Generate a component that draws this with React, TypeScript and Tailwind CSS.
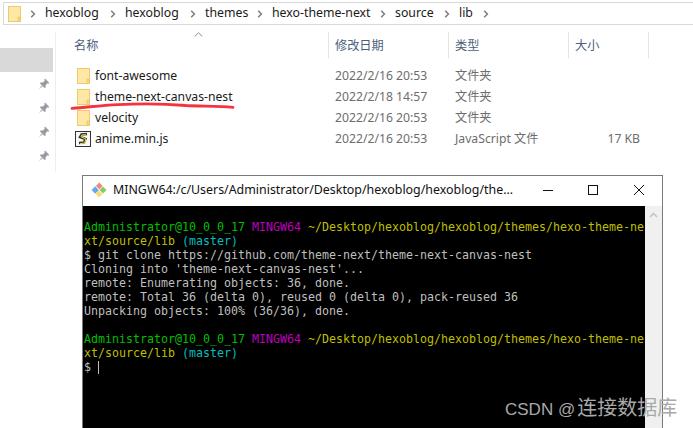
const uiFont = { fontFamily: '"Noto Sans", "Noto Sans CJK SC", sans-serif' };

const rows = [
  { name: "font-awesome", date: "2022/2/16 20:53", type: "文件夹", size: "" },
  { name: "theme-next-canvas-nest", date: "2022/2/18 14:57", type: "文件夹", size: "" },
  { name: "velocity", date: "2022/2/16 20:53", type: "文件夹", size: "" },
  { name: "anime.min.js", date: "2022/2/16 20:53", type: "JavaScript 文件", size: "17 KB" },
];

function Folder({ className }: { className?: string }) {
  return (
    <svg width="13" height="16" viewBox="0 0 13 16" className={className}>
      <rect x="0.5" y="0.5" width="12" height="15" fill="#ffe8a6" stroke="#eccb6e" />
      <rect x="10" y="11" width="2.5" height="4.5" fill="#f7d877" stroke="#e6bf58" strokeWidth="0.6" />
    </svg>
  );
}

function ScriptIcon() {
  return (
    <svg width="16" height="16" viewBox="0 0 16 16" className="-ml-[2px]">
      <rect x="0.5" y="0.5" width="15" height="15" fill="#f8f8f4" stroke="#333" />
      <path d="M12 3 L6.5 3.5 L5 6 L10.5 8 L9 11.5 L4 12" fill="none" stroke="#333" strokeWidth="2.4" />
      <path d="M11 3.6 L6.8 4 L6 5.8 L11 8 L9.6 12 L5 12.6" fill="none" stroke="#e6da3c" strokeWidth="1" />
    </svg>
  );
}

function Pin() {
  return (
    <svg width="12" height="12" viewBox="0 0 12 12">
      <path d="M7 0.5 L11.5 5 L10.5 5.6 L9.6 5.2 L7.6 7.2 L7.6 9.4 L6.8 10.2 L1.8 5.2 L2.6 4.4 L4.8 4.4 L6.8 2.4 L6.4 1.5 Z" fill="#979da3" />
      <path d="M3.8 7.2 L0.8 11.2 L4.8 8.2 Z" fill="#a9aeb3" />
    </svg>
  );
}

function Sep({ className }: { className?: string }) {
  return (
    <svg width="6" height="8" viewBox="0 0 6 8" className={`shrink-0 ${className ?? ""}`}>
      <path d="M1.2 0.8 L4.4 4 L1.2 7.2" fill="none" stroke="#7b7b7b" strokeWidth="1.5" />
    </svg>
  );
}

function GitIcon() {
  return (
    <svg width="16" height="16" viewBox="0 0 16 16">
      <path d="M8 8 L4.2 4.2 L0.6 8 L4.2 11.8 Z" fill="#62a9ef" />
      <path d="M8.2 7.6 L4.9 3.9 L8.2 0.6 L11.6 4.1 Z" fill="#ee8a7c" />
      <path d="M8.4 8 L12 4.5 L15.6 8 L12 11.6 Z" fill="#8bc96b" />
      <path d="M8 8.4 L11.5 12 L8 15.6 L4.6 12.1 Z" fill="#f7dc75" />
      <path d="M5.5 5 L8 8 L11 11" fill="none" stroke="#ffffff" strokeWidth="0.8" />
    </svg>
  );
}

function Prompt() {
  return (
    <>
      <div>
        <span className="text-[#00bf00]">Administrator@10_0_0_17</span>{" "}
        <span className="text-[#bf00bf]">MINGW64</span>{" "}
        <span className="text-[#bfbf00]">~/Desktop/hexoblog/hexoblog/themes/hexo-theme-ne</span>
      </div>
      <div>
        <span className="text-[#bfbf00]">xt/source/lib</span>{" "}
        <span className="text-[#00bfbf]">(master)</span>
      </div>
    </>
  );
}

export default function App() {
  return (
    <div className="relative w-[693px] h-[428px] overflow-hidden bg-white" style={uiFont}>
      {/* address bar */}
      <div className="mt-[2px] ml-[3px] h-[23px] flex items-center border border-r-0 border-[#d9d9d9] text-[12.3px] text-[#1a1a1a] whitespace-nowrap">
        <Folder className="ml-[4px]" />
        <Sep className="ml-[9px]" />
        <span className="ml-[9px] w-[54px]">hexoblog</span>
        <Sep className="ml-[11px]" />
        <span className="ml-[9px] w-[54px]">hexoblog</span>
        <Sep className="ml-[11px]" />
        <span className="ml-[9px] w-[42px]">themes</span>
        <Sep className="ml-[10px]" />
        <span className="ml-[9px] w-[98px]">hexo-theme-next</span>
        <Sep className="ml-[10px]" />
        <span className="ml-[9px] w-[39px]">source</span>
        <Sep className="ml-[10px]" />
        <span className="ml-[9px] w-[13px]">lib</span>
        <Sep className="ml-[11px]" />
      </div>

      <div className="flex">
        {/* nav pane */}
        <div className="w-[53px] shrink-0 pt-[23px]">
          <div className="h-[24px] bg-[#d9d9d9]" />
          {[0, 1, 2, 3].map((i) => (
            <div key={i} className="h-[24px] flex items-center justify-end pr-[3px]">
              <Pin />
            </div>
          ))}
        </div>

        {/* file list */}
        <div className="relative mt-[7px] ml-[2px] w-[638px] h-[140px] border-l border-[#eeeeee] text-[12.2px]">
          <div className="grid grid-cols-[255px_120px_120px_80px] h-[26px] pl-[18px] items-center text-[#4c607a]">
            <div className="relative h-full flex items-center pt-[2px] border-r border-[#e5e5e5]">
              名称
              <svg width="9" height="5" viewBox="0 0 9 5" className="absolute left-[120px] top-0">
                <path d="M0.8 4.4 L4.5 0.8 L8.2 4.4" fill="none" stroke="#8a8a8a" />
              </svg>
            </div>
            <div className="h-full flex items-center pt-[2px] pl-[6px] border-r border-[#e5e5e5]">修改日期</div>
            <div className="h-full flex items-center pt-[2px] pl-[6px] border-r border-[#e5e5e5]">类型</div>
            <div className="h-full flex items-center pt-[2px] pl-[6px] border-r border-[#e5e5e5]">大小</div>
          </div>
          <div className="mt-[8px] text-[#6d6d6d]">
            {rows.map((r, i) => (
              <div key={r.name} className="grid grid-cols-[255px_120px_120px_71px] h-[21px] pl-[18px] items-center">
                <div className="flex items-center text-[#1a1a1a]">
                  <span className="w-[21px] flex justify-start pl-[3px]">
                    {i === 3 ? <ScriptIcon /> : <Folder />}
                  </span>
                  {r.name}
                </div>
                <div className="pl-[6px]">{r.date}</div>
                <div className="pl-[6px]">{r.type}</div>
                <div className="text-right">{r.size}</div>
              </div>
            ))}
          </div>
        </div>
      </div>

      {/* red marker stroke */}
      <svg width="170" height="10" viewBox="0 0 170 10" className="absolute left-[68px] top-[100px]">
        <path d="M4 8.4 C22 7 32 5.5 50 4.6 C75 3.4 100 4 118 5.5 C135 6.4 150 5.6 165 7.4" fill="none" stroke="#f5333f" strokeWidth="2.8" strokeLinecap="round" />
      </svg>

      {/* terminal window */}
      <div className="absolute left-[82px] top-[175px] w-[581px] h-[260px] flex flex-col border border-[#7a7a7a] bg-white">
        <div className="h-[30px] shrink-0 flex items-center pl-[8px] pb-[2px] text-[12.4px] text-[#111]">
          <GitIcon />
          <span className="ml-[6px] w-[404px] whitespace-nowrap">MINGW64:/c/Users/Administrator/Desktop/hexoblog/hexoblog/the...</span>
          <svg width="12" height="12" viewBox="0 0 12 12" className="ml-[25px]">
            <path d="M1 6.5 H11" stroke="#111" />
          </svg>
          <svg width="12" height="12" viewBox="0 0 12 12" className="ml-[33px]">
            <rect x="1.5" y="1.5" width="9" height="9" fill="none" stroke="#111" />
          </svg>
          <svg width="12" height="12" viewBox="0 0 12 12" className="ml-[34px]">
            <path d="M1 1 L11 11 M11 1 L1 11" stroke="#111" />
          </svg>
        </div>
        <div className="flex-1 flex">
          <div
            className="w-[562px] bg-black pt-[14px] pl-[1px] text-[11.63px] leading-[14px] whitespace-pre overflow-hidden text-[#bfbfbf]"
            style={{ fontFamily: '"DejaVu Sans Mono", "Liberation Mono", monospace' }}
          >
            <Prompt />
            <div>$ git clone https://github.com/theme-next/theme-next-canvas-nest</div>
            <div>Cloning into 'theme-next-canvas-nest'...</div>
            <div>remote: Enumerating objects: 36, done.</div>
            <div>remote: Total 36 (delta 0), reused 0 (delta 0), pack-reused 36</div>
            <div>Unpacking objects: 100% (36/36), done.</div>
            <div className="h-[14px]" />
            <Prompt />
            <div className="flex items-center">
              $ <span className="w-px h-[13px] bg-[#bfbfbf]" />
            </div>
          </div>
          <div className="flex-1 bg-[#f0f0f0] pt-[6px] flex justify-center items-start">
            <svg width="9" height="6" viewBox="0 0 9 6">
              <path d="M1 5 L4.5 1.5 L8 5" fill="none" stroke="#c4c4c4" strokeWidth="1.6" />
            </svg>
          </div>
        </div>
      </div>

      {/* watermark */}
      <div
        className="absolute left-[505px] top-[395px] text-[20px] leading-[26px] whitespace-nowrap text-[#a9a9a9]"
        style={{ fontFamily: '"Liberation Sans", "Noto Sans CJK SC", sans-serif' }}
      >
        <span className="text-[17px]">CSDN @</span>
        <span className="ml-[2px]">连接数据库</span>
      </div>
    </div>
  );
}
